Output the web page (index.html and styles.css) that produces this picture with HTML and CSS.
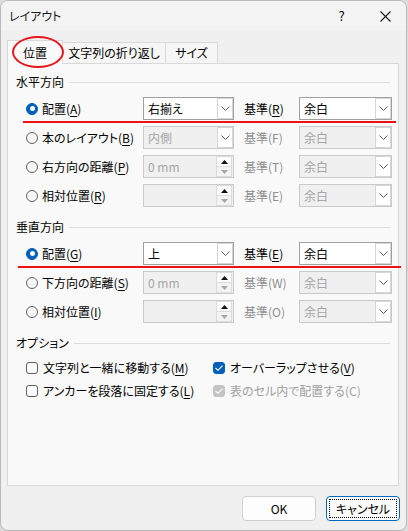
FILE: index.html
```html
<!DOCTYPE html>
<html lang="ja">
<head>
<meta charset="utf-8">
<title>レイアウト</title>
<link rel="stylesheet" href="styles.css">
</head>
<body>
<div class="dialog">
  <div class="titlebar">
    <span class="title">レイアウト</span>
    <span class="tb-btn help">?</span>
    <span class="tb-btn close"><svg width="11" height="11" viewBox="0 0 11 11"><path d="M0.5 0.5L10.5 10.5M10.5 0.5L0.5 10.5" stroke="#1a1a1a" stroke-width="1.1" fill="none"/></svg></span>
  </div>

  <div class="tabs">
    <div class="tab active">位置</div>
    <div class="tab t2">文字列の折り返し</div>
    <div class="tab t3">サイズ</div>
    <div class="circle"></div>
  </div>

  <div class="panel">
    <div class="group">
      <div class="group-head"><span>水平方向</span></div>
      <div class="rows">
        <div class="row">
          <label class="opt"><span class="radio on"></span><span>配置(<u>A</u>)</span></label>
          <div class="field select"><span class="val">右揃え</span><span class="arrow"><svg width="9" height="5" viewBox="0 0 9 5"><path d="M0.5 0.5L4.5 4.5L8.5 0.5" stroke="#5a5a5a" fill="none"/></svg></span></div>
          <span class="lbl">基準(<u>R</u>)</span>
          <div class="field select"><span class="val">余白</span><span class="arrow"><svg width="9" height="5" viewBox="0 0 9 5"><path d="M0.5 0.5L4.5 4.5L8.5 0.5" stroke="#5a5a5a" fill="none"/></svg></span></div>
          <span class="annot a1"></span>
        </div>
        <div class="row">
          <label class="opt"><span class="radio"></span><span>本のレイアウト(<u>B</u>)</span></label>
          <div class="field select dis"><span class="val">内側</span><span class="arrow"><svg width="9" height="5" viewBox="0 0 9 5"><path d="M0.5 0.5L4.5 4.5L8.5 0.5" stroke="#5a5a5a" fill="none"/></svg></span></div>
          <span class="lbl dis">基準(F)</span>
          <div class="field select dis"><span class="val">余白</span><span class="arrow"><svg width="9" height="5" viewBox="0 0 9 5"><path d="M0.5 0.5L4.5 4.5L8.5 0.5" stroke="#5a5a5a" fill="none"/></svg></span></div>
        </div>
        <div class="row">
          <label class="opt"><span class="radio"></span><span>右方向の距離(<u>P</u>)</span></label>
          <div class="field spin dis"><span class="val">0 mm</span><span class="spinbtns"><span class="up"><svg width="7" height="4" viewBox="0 0 7 4"><path d="M0 4L3.5 0L7 4Z" fill="#111"/></svg></span><span class="down"><svg width="7" height="4" viewBox="0 0 7 4"><path d="M0 0L3.5 4L7 0Z" fill="#a8a8a8"/></svg></span></span></div>
          <span class="lbl dis">基準(T)</span>
          <div class="field select dis"><span class="val">余白</span><span class="arrow"><svg width="9" height="5" viewBox="0 0 9 5"><path d="M0.5 0.5L4.5 4.5L8.5 0.5" stroke="#5a5a5a" fill="none"/></svg></span></div>
        </div>
        <div class="row">
          <label class="opt"><span class="radio"></span><span>相対位置(<u>R</u>)</span></label>
          <div class="field spin dis"><span class="val"></span><span class="spinbtns"><span class="up"><svg width="7" height="4" viewBox="0 0 7 4"><path d="M0 4L3.5 0L7 4Z" fill="#111"/></svg></span><span class="down"><svg width="7" height="4" viewBox="0 0 7 4"><path d="M0 0L3.5 4L7 0Z" fill="#a8a8a8"/></svg></span></span></div>
          <span class="lbl dis">基準(E)</span>
          <div class="field select dis"><span class="val">余白</span><span class="arrow"><svg width="9" height="5" viewBox="0 0 9 5"><path d="M0.5 0.5L4.5 4.5L8.5 0.5" stroke="#5a5a5a" fill="none"/></svg></span></div>
        </div>
      </div>
    </div>

    <div class="group">
      <div class="group-head"><span>垂直方向</span></div>
      <div class="rows">
        <div class="row">
          <label class="opt"><span class="radio on"></span><span>配置(<u>G</u>)</span></label>
          <div class="field select"><span class="val">上</span><span class="arrow"><svg width="9" height="5" viewBox="0 0 9 5"><path d="M0.5 0.5L4.5 4.5L8.5 0.5" stroke="#5a5a5a" fill="none"/></svg></span></div>
          <span class="lbl">基準(<u>E</u>)</span>
          <div class="field select"><span class="val">余白</span><span class="arrow"><svg width="9" height="5" viewBox="0 0 9 5"><path d="M0.5 0.5L4.5 4.5L8.5 0.5" stroke="#5a5a5a" fill="none"/></svg></span></div>
          <span class="annot a2"></span>
        </div>
        <div class="row">
          <label class="opt"><span class="radio"></span><span>下方向の距離(<u>S</u>)</span></label>
          <div class="field spin dis"><span class="val">0 mm</span><span class="spinbtns"><span class="up"><svg width="7" height="4" viewBox="0 0 7 4"><path d="M0 4L3.5 0L7 4Z" fill="#111"/></svg></span><span class="down"><svg width="7" height="4" viewBox="0 0 7 4"><path d="M0 0L3.5 4L7 0Z" fill="#a8a8a8"/></svg></span></span></div>
          <span class="lbl dis">基準(W)</span>
          <div class="field select dis"><span class="val">余白</span><span class="arrow"><svg width="9" height="5" viewBox="0 0 9 5"><path d="M0.5 0.5L4.5 4.5L8.5 0.5" stroke="#5a5a5a" fill="none"/></svg></span></div>
        </div>
        <div class="row">
          <label class="opt"><span class="radio"></span><span>相対位置(<u>I</u>)</span></label>
          <div class="field spin dis"><span class="val"></span><span class="spinbtns"><span class="up"><svg width="7" height="4" viewBox="0 0 7 4"><path d="M0 4L3.5 0L7 4Z" fill="#111"/></svg></span><span class="down"><svg width="7" height="4" viewBox="0 0 7 4"><path d="M0 0L3.5 4L7 0Z" fill="#a8a8a8"/></svg></span></span></div>
          <span class="lbl dis">基準(O)</span>
          <div class="field select dis"><span class="val">余白</span><span class="arrow"><svg width="9" height="5" viewBox="0 0 9 5"><path d="M0.5 0.5L4.5 4.5L8.5 0.5" stroke="#5a5a5a" fill="none"/></svg></span></div>
        </div>
      </div>
    </div>

    <div class="group">
      <div class="group-head"><span>オプション</span></div>
      <div class="checks">
        <label class="chk"><span class="box"></span><span>文字列と一緒に移動する(<u>M</u>)</span></label>
        <label class="chk"><span class="box on"><svg width="8" height="6" viewBox="0 0 8 6"><path d="M0.5 3L3 5.3L7.5 0.7" stroke="#fff" stroke-width="1.1" fill="none"/></svg></span><span>オーバーラップさせる(<u>V</u>)</span></label>
        <label class="chk"><span class="box"></span><span>アンカーを段落に固定する(<u>L</u>)</span></label>
        <label class="chk dis"><span class="box on dis"><svg width="8" height="6" viewBox="0 0 8 6"><path d="M0.5 3L3 5.3L7.5 0.7" stroke="#fff" stroke-width="1.1" fill="none"/></svg></span><span>表のセル内で配置する(C)</span></label>
      </div>
    </div>
  </div>

  <div class="footer">
    <button class="btn">OK</button>
    <button class="btn focus">キャンセル</button>
  </div>
</div>
</body>
</html>
```

FILE: styles.css
```css
* { box-sizing: border-box; }

body {
  margin: 0;
  background: #dcdcdc;
  font-family: "Noto Sans CJK JP", "Noto Sans", sans-serif;
  font-size: 12px;
  line-height: 16px;
  color: #000;
  font-feature-settings: "palt";
}

.dialog {
  width: 407px;
  height: 531px;
  border: 1px solid #b9b9b9;
  border-radius: 8px;
  background: #f0f0f0;
  display: flex;
  flex-direction: column;
  overflow: hidden;
}

.titlebar {
  height: 30px;
  display: flex;
  align-items: center;
  padding-left: 8px;
  background: #f3f3f3;
}
.title { flex: 1; font-size: 12px; color: #1a1a1a; }
.tb-btn {
  height: 30px;
  display: flex;
  align-items: center;
  justify-content: center;
}
.help { width: 45px; font-size: 13px; }
.close { width: 42px; }

.tabs {
  height: 32px;
  display: flex;
  align-items: flex-end;
  padding-left: 6px;
  position: relative;
}
.tab {
  height: 21px;
  border: 1px solid #d9d9d9;
  border-bottom: none;
  background: #f6f6f6;
  display: flex;
  align-items: center;
  justify-content: center;
}
.tab.active {
  width: 56px;
  height: 24px;
  margin-bottom: -1px;
  background: #f9f9f9;
  position: relative;
  z-index: 1;
  padding-top: 1px;
}
.tab.t2 { width: 103px; border-left: none; }
.tab.t3 { width: 52px; border-left: none; }

.circle {
  position: absolute;
  left: 11px;
  top: 5px;
  width: 52px;
  height: 32px;
  border: 2px solid #e8141b;
  border-radius: 50%;
  z-index: 2;
}

.panel {
  margin-left: 6px;
  width: 392px;
  height: 423px;
  border: 1px solid #d9d9d9;
  background: #f9f9f9;
  padding: 10px 8px 0 8px;
  display: flex;
  flex-direction: column;
  gap: 12px;
}

.group-head {
  display: flex;
  align-items: center;
  gap: 5px;
  height: 16px;
}
.group-head::after {
  content: "";
  flex: 1;
  height: 1px;
  background: #dcdcdc;
}

.rows {
  margin-top: 7px;
  padding-left: 10px;
  display: flex;
  flex-direction: column;
  gap: 6px;
}
.row {
  position: relative;
  display: grid;
  grid-template-columns: 117px 91px 65px 93px;
  height: 23px;
  align-items: center;
}

.opt {
  display: flex;
  align-items: center;
  gap: 4px;
  white-space: nowrap;
}
.radio {
  width: 12px;
  height: 12px;
  border-radius: 50%;
  border: 1px solid #626262;
  background: #f6f6f6;
  flex: none;
  display: flex;
  align-items: center;
  justify-content: center;
}
.radio.on {
  border-color: #005fb8;
  background: #005fb8;
}
.radio.on::after {
  content: "";
  width: 5px;
  height: 5px;
  border-radius: 50%;
  background: #fff;
}

.lbl { padding-left: 10px; white-space: nowrap; }
.lbl.dis { color: #8e8e8e; }

u { text-decoration: underline; text-underline-offset: 2px; }

.field {
  height: 23px;
  border: 1px solid #a0a0a0;
  background: #fff;
  display: flex;
  align-items: center;
  padding-left: 4px;
}
.field .val { flex: 1; white-space: nowrap; }
.field.dis {
  border-color: #cacaca;
  background: #f0f0f0;
  color: #a6a6a6;
}
.arrow {
  width: 16px;
  height: 21px;
  border: 1px solid #d6d6d6;
  background: #fff;
  display: flex;
  align-items: center;
  justify-content: center;
}
.spinbtns {
  width: 16px;
  height: 21px;
  display: flex;
  flex-direction: column;
  margin-right: 1px;
}
.spinbtns span {
  flex: 1;
  display: flex;
  align-items: center;
  justify-content: center;
  border: 1px solid #dcdcdc;
}
.spinbtns .up { background: #fbfbfb; }
.spinbtns .down { background: #f3f3f3; border-top: none; }

.annot {
  position: absolute;
  height: 2px;
  background: #ee1111;
  top: 24px;
}
.annot.a1 { left: -3px; width: 373px; }
.annot.a2 { left: -8px; width: 383px; }

.checks {
  margin-top: 8px;
  padding-left: 10px;
  display: grid;
  grid-template-columns: 187px auto;
  row-gap: 5px;
}
.chk {
  height: 18px;
  display: flex;
  align-items: center;
  gap: 5px;
  white-space: nowrap;
}
.chk.dis { color: #a0a0a0; }
.box {
  width: 12px;
  height: 12px;
  border: 1px solid #5f5f5f;
  border-radius: 3px;
  background: #fbfbfb;
  flex: none;
  display: flex;
  align-items: center;
  justify-content: center;
}
.box.on { background: #005fb8; border-color: #005fb8; }
.box.on.dis { background: #c4c4c4; border-color: #c4c4c4; }

.footer {
  display: flex;
  justify-content: flex-end;
  gap: 10px;
  padding: 10px 6px 0 0;
}
.btn {
  width: 74px;
  height: 25px;
  border: 1px solid #d0d0d0;
  border-radius: 4px;
  background: #fdfdfd;
  font: inherit;
  font-size: 12px;
  color: #000;
  padding: 0;
  position: relative;
}
.btn.focus { border-color: #0067c0; }
.btn.focus::after {
  content: "";
  position: absolute;
  inset: 2px;
  border: 1px dotted #000;
}
```
